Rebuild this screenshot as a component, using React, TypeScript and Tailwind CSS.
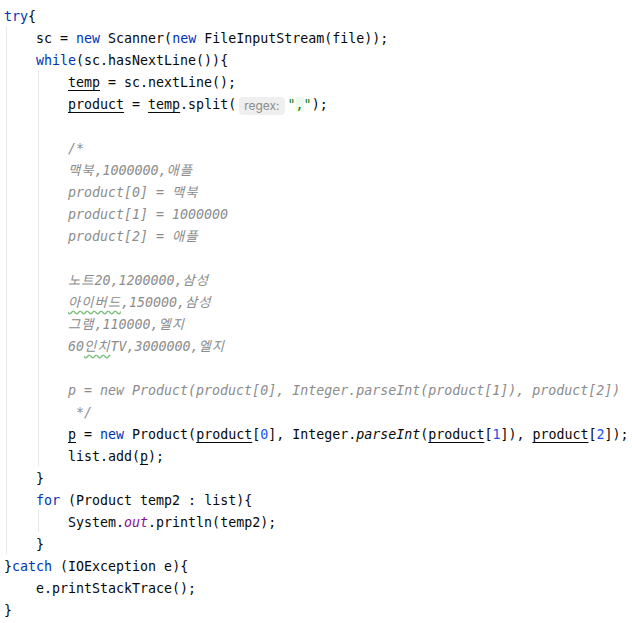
import type { ReactNode } from "react";

const K = ({ children }: { children: ReactNode }) => (
  <span className="text-[#0033b3]">{children}</span>
);
const N = ({ children }: { children: ReactNode }) => (
  <span className="text-[#1750eb]">{children}</span>
);
const U = ({ children }: { children: ReactNode }) => (
  <span className="underline decoration-[#080808] underline-offset-[3px]">{children}</span>
);
const Typo = ({ children }: { children: ReactNode }) => (
  <span className="underline decoration-wavy decoration-[#7cbf7c] underline-offset-[3px]">{children}</span>
);
// hangul in the comments renders a bit wider in the editor's fallback font
const H = ({ children }: { children: ReactNode }) => (
  <span className="tracking-[1px]">{children}</span>
);

function Line({ children, className = "" }: { children?: ReactNode; className?: string }) {
  return <div className={`h-[22px] leading-[26px] whitespace-pre ${className}`}>{children ?? " "}</div>;
}

function Comment({ children }: { children: ReactNode }) {
  return <Line className="italic text-[#8c8c8c]">{children}</Line>;
}

export default function App() {
  return (
    <div className="w-[632px] h-[623px] overflow-hidden bg-white pt-[4px] text-[13.3px] text-[#080808] font-['DejaVu_Sans_Mono','Noto_Sans_CJK_KR',monospace]">
      <Line className="pl-[4px]">
        <K>try</K>{"{"}
      </Line>

      <div className="ml-[6px] border-l border-[#e8e8e8] pl-[29px]">
        <Line>
          sc = <K>new</K> Scanner(<K>new</K> FileInputStream(file));
        </Line>
        <Line>
          <K>while</K>(sc.hasNextLine()){"{"}
        </Line>

        <div className="ml-[2px] border-l border-[#e8e8e8] pl-[29px]">
          <Line>
            <U>temp</U> = sc.nextLine();
          </Line>
          <Line>
            <U>product</U> = <U>temp</U>.split(
            <span className="inline-block h-[18px] leading-[18px] px-[5px] mx-[3px] rounded-[4px] bg-[#efefef] text-[#8c8c8c] text-[12px] not-italic align-[-1px] font-['Inter',sans-serif]">
              regex:
            </span>
            <span className="text-[#067d17]">
              "<span className="bg-[#ecf9ec]">,</span>"
            </span>
            );
          </Line>
          <Line />
          <Comment>/*</Comment>
          <Comment>
            <H>맥북</H>,1000000,<H>애플</H>
          </Comment>
          <Comment>
            product[0] = <H>맥북</H>
          </Comment>
          <Comment>product[1] = 1000000</Comment>
          <Comment>
            product[2] = <H>애플</H>
          </Comment>
          <Line />
          <Comment>
            <H>노트</H>20,1200000,<H>삼성</H>
          </Comment>
          <Comment>
            <H>
              <Typo>아이버드</Typo>
            </H>
            ,150000,<H>삼성</H>
          </Comment>
          <Comment>
            <H>그램</H>,110000,<H>엘지</H>
          </Comment>
          <Comment>
            60
            <H>
              <Typo>인치</Typo>
            </H>
            TV,3000000,<H>엘지</H>
          </Comment>
          <Line />
          <Comment>p = new Product(product[0], Integer.parseInt(product[1]), product[2])</Comment>
          <Comment> */</Comment>
          <Line>
            <U>p</U> = <K>new</K> Product(<U>product</U>[<N>0</N>], Integer.<span className="italic">parseInt</span>(
            <U>product</U>[<N>1</N>]), <U>product</U>[<N>2</N>]);
          </Line>
          <Line>
            list.add(<U>p</U>);
          </Line>
        </div>

        <Line>{"}"}</Line>
        <Line>
          <K>for</K> (Product temp2 : list){"{"}
        </Line>
        <div className="ml-[2px] border-l border-[#e8e8e8] pl-[29px]">
          <Line>
            System.<span className="italic text-[#871094]">out</span>.println(temp2);
          </Line>
        </div>
        <Line>{"}"}</Line>
      </div>

      <Line className="pl-[4px]">
        {"}"}
        <K>catch</K> (IOException e){"{"}
      </Line>
      <Line className="pl-[36px]">e.printStackTrace();</Line>
      <Line className="pl-[4px]">{"}"}</Line>
    </div>
  );
}
